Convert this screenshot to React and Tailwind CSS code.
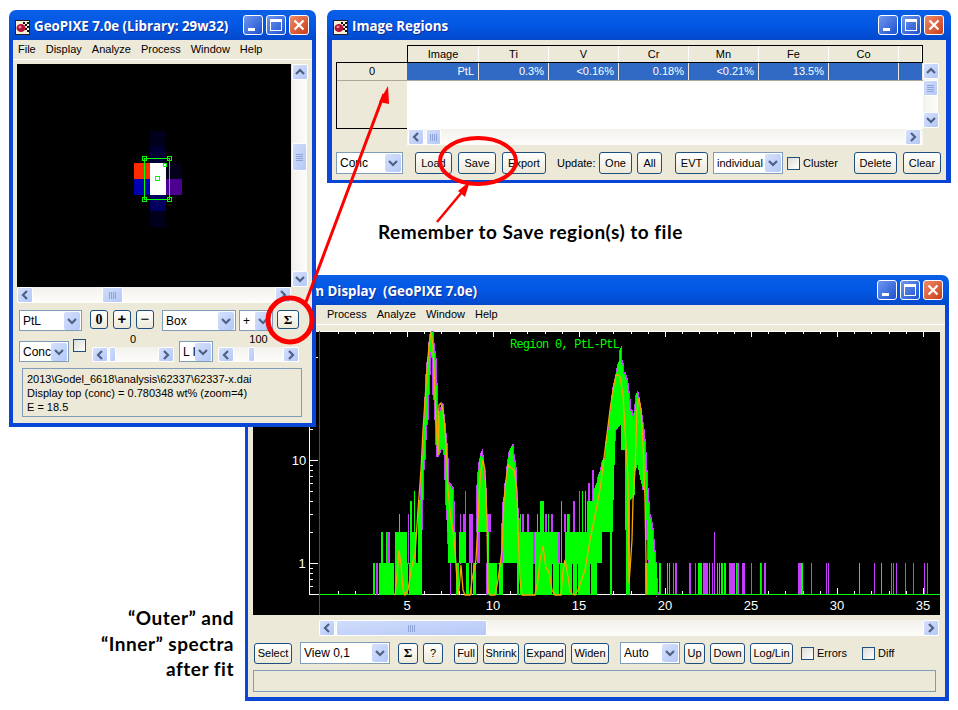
import React from "react";

const UI_FONT = "font-['Liberation_Sans',sans-serif]";

/* ---------- small xp widgets ---------- */
const Chevron = ({ dir = "down" }) => {
  const d = {
    up: "M3 9 L7 5 L11 9",
    down: "M3 5 L7 9 L11 5",
    left: "M9 3 L5 7 L9 11",
    right: "M5 3 L9 7 L5 11",
  }[dir];
  return (
    <svg width="14" height="14" viewBox="0 0 14 14" fill="none">
      <path d={d} stroke="#4d6185" strokeWidth="2.2" />
    </svg>
  );
};

const ArrowBtn = ({ dir, className = "" }) => (
  <div className={`flex h-[16px] w-[16px] shrink-0 items-center justify-center rounded-[2px] border border-white bg-gradient-to-br from-[#d5e0fb] to-[#b4c8f8] ${className}`}>
    <Chevron dir={dir} />
  </div>
);

const Grip = ({ vertical }) => (
  <div className={vertical ? "flex flex-col gap-[1px]" : "flex gap-[1px]"}>
    {[0, 1, 2, 3].map((i) => (
      <div key={i} className={vertical ? "h-[1px] w-[7px] bg-[#8ea4d8]" : "h-[7px] w-[1px] bg-[#8ea4d8]"} />
    ))}
  </div>
);

const Thumb = ({ vertical, className = "", grip = true }) => (
  <div className={`flex shrink-0 items-center justify-center rounded-[2px] border border-white bg-gradient-to-br from-[#cfdcfb] to-[#b6c9f7] ${className}`}>
    {grip && <Grip vertical={vertical} />}
  </div>
);

const Btn = ({ className = "", children }) => (
  <div className={`flex h-[21px] shrink-0 items-center justify-center rounded-[3px] border border-[#1c4f80] bg-gradient-to-b from-white to-[#ece9d8] text-[11px] text-black ${className}`}>
    {children}
  </div>
);

const Combo = ({ className = "", h = "h-[22px]", text = "text-[12px]", label }) => (
  <div className={`flex shrink-0 items-center justify-between border border-[#7f9db9] bg-white pl-[3px] pr-[1px] text-black ${text} ${h} ${className}`}>
    <span className="overflow-hidden whitespace-nowrap">{label}</span>
    <div className="flex h-[18px] w-[16px] shrink-0 items-center justify-center rounded-[2px] bg-gradient-to-br from-[#d5e0fb] to-[#b4c8f8]">
      <Chevron dir="down" />
    </div>
  </div>
);

const Check = ({ className = "" }) => (
  <div className={`h-[13px] w-[13px] shrink-0 border border-[#1c5180] bg-gradient-to-br from-[#dcdcd7] to-white ${className}`} />
);

const AppIcon = () => (
  <svg width="15" height="15" viewBox="0 0 15 15" className="shrink-0">
    <rect x="0.5" y="0.5" width="14" height="14" fill="#f4f0d8" stroke="#222" />
    <path d="M8 2h2v2H8zM12 2h2v2h-2zM10 4h2v2h-2zM12 6h2v2h-2zM10 8h2v2h-2zM12 10h2v2h-2z" fill="#111" />
    <ellipse cx="6" cy="8" rx="4.5" ry="4" fill="#b3123a" />
    <ellipse cx="5" cy="7" rx="1.5" ry="1.2" fill="#f09090" />
  </svg>
);

const TitleButtons = () => (
  <div className="flex gap-[3px]">
    <div className="relative h-[20px] w-[20px] rounded-[3px] border border-white bg-gradient-to-br from-[#6f97ee] to-[#1f4fd0]">
      <div className="absolute bottom-[3px] left-[4px] h-[3px] w-[7px] bg-white" />
    </div>
    <div className="flex h-[20px] w-[20px] items-center justify-center rounded-[3px] border border-white bg-gradient-to-br from-[#6f97ee] to-[#1f4fd0]">
      <div className="h-[12px] w-[12px] border border-t-[3px] border-white" />
    </div>
    <div className="flex h-[20px] w-[20px] items-center justify-center rounded-[3px] border border-white bg-gradient-to-br from-[#ee8a66] to-[#c83a14]">
      <svg width="12" height="12" viewBox="0 0 12 12">
        <path d="M1.5 1.5 L10.5 10.5 M10.5 1.5 L1.5 10.5" stroke="white" strokeWidth="2.2" />
      </svg>
    </div>
  </div>
);

const TitleBar = ({ children, padRight = "pr-[7px]", textClass = "" }) => (
  <div className={`flex h-[30px] shrink-0 items-center justify-between rounded-t-[7px] bg-gradient-to-b from-[#0a5fe6] via-[#0258e4] to-[#0348cc] pl-[6px] ${padRight}`}>
    <div className="flex min-w-0 items-center gap-[4px] pt-[4px]">
      <AppIcon />
      <span className={`whitespace-pre font-['Open_Sans',sans-serif] text-[13.3px] font-bold text-white [text-shadow:1px_1px_#0f2f98] ${textClass}`}>
        {children}
      </span>
    </div>
    <TitleButtons />
  </div>
);

const Menu = ({ items, className = "" }) => (
  <div className={`flex h-[20px] shrink-0 items-center gap-[10px] border-b border-white text-[11px] text-black ${className}`}>
    {items.map((m) => (
      <span key={m}>{m}</span>
    ))}
  </div>
);

/* ---------- left window image ---------- */
const ImagePixels = () => (
  <svg className="block" width="274" height="223" viewBox="17 64 274 223" shapeRendering="crispEdges">
    <rect x="17" y="64" width="274" height="223" fill="#000" />
    <rect x="150" y="131" width="16" height="16" fill="#00001c" />
    <rect x="150" y="147" width="16" height="16" fill="#000034" />
    <rect x="166" y="163" width="16" height="16" fill="#04001c" />
    <rect x="134" y="163" width="16" height="16" fill="#ff2a00" />
    <rect x="134" y="179" width="16" height="16" fill="#0000b0" />
    <rect x="150" y="163" width="16" height="32" fill="#fff" />
    <rect x="166" y="179" width="16" height="16" fill="#4b0090" />
    <rect x="150" y="195" width="16" height="16" fill="#000060" />
    <rect x="150" y="211" width="16" height="16" fill="#00001c" />
    <g fill="none" stroke="#00ff00">
      <rect x="144.5" y="158.5" width="25" height="41" />
      <rect x="142.5" y="156.5" width="4" height="4" />
      <rect x="167.5" y="156.5" width="4" height="4" />
      <rect x="142.5" y="197.5" width="4" height="4" />
      <rect x="167.5" y="197.5" width="4" height="4" />
      <rect x="155.5" y="176.5" width="4" height="4" />
      <rect x="163.5" y="163.5" width="3" height="3" />
    </g>
  </svg>
);

/* ---------- spectrum data (page coordinates) ---------- */
const interp = (pts, x) => {
  if (x <= pts[0][0]) return pts[0][1];
  for (let i = 1; i < pts.length; i++) {
    if (x <= pts[i][0]) {
      const [x0, y0] = pts[i - 1];
      const [x1, y1] = pts[i];
      return y0 + ((y1 - y0) * (x - x0)) / (x1 - x0);
    }
  }
  return pts[pts.length - 1][1];
};

const wobble = (x) => (((x * 7919) % 13) / 13 - 0.5) * 5;

const band = (x0, x1, top, bot, jitter = 0) => {
  const out = [];
  for (let x = x0; x < x1; x++) {
    out.push([x, x + 1, Math.round(interp(top, x) + jitter * wobble(x)), Math.round(interp(bot, x))]);
  }
  return out;
};

const PEAKS = [
  ...band(
    421,
    453,
    [[421, 470], [422, 455], [423, 440], [424, 418], [425, 395], [426, 372], [427, 360], [428, 355], [429, 340], [430, 332], [432, 332], [433, 345], [435, 360], [436, 385], [437, 410], [439, 416], [441, 405], [442, 406], [444, 425], [446, 445], [447, 460], [448, 484], [453, 490]],
    [[421, 595], [422, 500], [423, 470], [424, 460], [425, 440], [426, 425], [427, 420], [428, 395], [429, 375], [430, 352], [432, 358], [433, 395], [434, 400], [435, 425], [436, 445], [437, 457], [441, 448], [443, 450], [444, 455], [445, 480], [446, 510], [447, 532], [448, 563], [453, 563]],
  ),
  ...band(
    477,
    488,
    [[477, 483], [478, 470], [479, 460], [480, 455], [481, 452], [482, 458], [483, 470], [485, 490], [486, 515], [487, 532]],
    [[477, 532], [487, 532]],
    0.4,
  ),
  ...band(
    503,
    519,
    [[503, 500], [505, 490], [507, 465], [509, 450], [511, 446], [512, 445], [513, 455], [515, 470], [516, 500], [518, 520]],
    [[503, 563], [518, 563]],
    0.4,
  ),
  ...band(
    593,
    658,
    [[593, 491], [596, 483], [600, 470], [602, 460], [605, 457], [606, 440], [608, 430], [610, 410], [611, 403], [613, 385], [615, 377], [617, 365], [619, 362], [620, 348], [621, 362], [622, 365], [623, 373], [626, 380], [627, 385], [629, 400], [630, 410], [633, 420], [636, 392], [637, 395], [640, 410], [643, 430], [645, 455], [647, 490], [649, 515], [652, 530], [655, 563], [657, 595]],
    [[593, 595], [596, 595], [597, 563], [601, 563], [602, 532], [609, 532], [610, 595], [611, 595], [612, 532], [613, 500], [615, 430], [620, 425], [621, 450], [624, 450], [625, 530], [626, 595], [629, 595], [630, 500], [634, 495], [635, 470], [637, 465], [640, 480], [643, 490], [645, 480], [646, 520], [648, 560], [652, 595], [657, 595]],
    0.5,
  ),
];

// [x0, x1, top, bottom]
const GREEN = [
  [319, 373, 594, 595],
  [373, 375, 563, 595], [379, 394, 563, 595], [381, 383, 532, 563], [386, 387, 532, 563],
  [395, 407, 532, 595], [399, 400, 514, 532], [407, 410, 563, 595], [410, 412, 501, 595],
  [412, 416, 532, 595], [414, 415, 491, 532], [416, 418, 563, 595], [418, 421, 500, 595],
  [453, 456, 532, 563], [456, 459, 563, 595], [459, 466, 532, 563], [466, 469, 563, 595],
  [471, 472, 563, 595], [473, 477, 563, 595], [487, 489, 532, 595], [489, 497, 563, 595],
  [498, 503, 563, 595], [517, 519, 563, 595], [519, 524, 532, 563], [524, 530, 532, 595],
  [520, 521, 514, 595], [521, 533, 532, 595], [535, 540, 532, 595], [537, 538, 514, 532],
  [540, 544, 501, 595], [544, 558, 532, 595], [548, 549, 514, 532], [558, 565, 563, 595],
  [561, 562, 501, 563], [565, 578, 532, 595], [567, 569, 514, 532], [578, 582, 532, 595],
  [582, 583, 491, 595], [583, 587, 532, 595], [585, 586, 491, 532], [587, 593, 501, 595],
  ...PEAKS,
  [645, 657, 563, 595],
  [659, 661, 563, 595], [667, 668, 563, 595], [669, 670, 563, 595], [698, 699, 563, 595],
  [699, 702, 563, 595], [709, 710, 563, 595], [717, 718, 563, 595], [719, 720, 563, 595],
  [721, 723, 563, 595], [724, 726, 563, 595], [736, 737, 563, 595], [760, 761, 563, 595],
  [801, 803, 563, 595], [859, 860, 563, 595], [881, 882, 563, 595],
  [657, 940, 594, 595],
];

const PURPLE = [
  [376, 378, 563, 595], [387, 390, 532, 595], [408, 409, 514, 595], [414, 415, 491, 595],
  [420, 422, 563, 595], [448, 451, 483, 532], [450, 451, 563, 595], [453, 455, 501, 563],
  [460, 461, 514, 595], [463, 466, 514, 532], [465, 466, 491, 514], [469, 473, 514, 563],
  [477, 480, 532, 563], [486, 488, 563, 595], [488, 491, 514, 532], [501, 503, 523, 563],
  [504, 505, 483, 563], [511, 513, 448, 470], [517, 519, 532, 563], [522, 524, 514, 532],
  [527, 529, 514, 532], [533, 535, 532, 595], [545, 547, 514, 532], [551, 553, 514, 532],
  [558, 560, 532, 563], [564, 566, 514, 532], [568, 570, 514, 532], [573, 575, 501, 532],
  [579, 580, 491, 532], [588, 590, 483, 501], [592, 594, 470, 501],
  ...PEAKS.flatMap(([a, b, t, u]) => [[a - 1, b - 1, t + 2, Math.min(u, t + 60)], [a + 1, b + 1, t - 2, Math.min(u, t + 60)]]),
  [656, 657, 563, 595], [673, 674, 563, 595], [675, 677, 563, 595], [689, 691, 563, 595],
  [695, 696, 563, 595], [703, 708, 563, 595], [712, 713, 563, 595], [714, 715, 532, 595],
  [729, 735, 563, 595], [737, 739, 563, 595], [742, 745, 563, 595], [751, 752, 563, 595],
  [761, 762, 563, 595], [764, 766, 563, 595], [798, 801, 563, 595], [811, 812, 563, 595],
  [826, 827, 563, 595], [828, 829, 563, 595], [874, 875, 563, 595], [891, 892, 563, 595],
  [893, 894, 563, 595], [896, 897, 563, 595], [905, 906, 563, 595], [913, 914, 563, 595],
  [924, 925, 563, 595], [927, 928, 563, 595],
];

// thin gaps showing through the noisy low-count part
const GAPS = [378, 394, 408, 460, 476, 497, 498, 533, 534, 552, 559, 572, 577, 590, 607];

const FIT = "395,595 397,575 399,550 401,565 403,590 405,595 408,590 412,565 415,555 416,540 418,510 421,470 423,430 425,400 427,370 429,345 431,332 433,345 434,370 436,420 437,437 438,455 439,405 441,403 443,410 445,430 447,460 448,490 449,500 451,520 453,530 455,550 456,565 458,595 459,590 461,565 463,590 465,595 470,595 472,580 476,560 478,520 480,480 481,470 483,460 485,470 487,520 488,590 490,595 495,595 498,580 502,550 504,500 506,480 508,465 511,468 514,470 517,490 518,530 520,580 522,595 535,595 538,580 540,560 543,546 546,568 549,572 552,590 555,595 561,595 563,570 565,560 567,570 570,590 572,594 575,595 578,590 585,570 590,540 596,510 600,490 605,450 610,410 613,390 616,375 618,375 620,377 623,395 625,430 628,480 629,583 630,570 632,540 633,500 635,470 637,410 639,398 641,410 643,445 645,500 646,560 647,595";

const YMINOR = [0.6, 0.7, 0.8, 0.9, 2, 3, 4, 5, 6, 7, 8, 9, 20, 30, 40, 50, 60, 70, 80, 90, 200];
const yOf = (v) => 563 - 103 * Math.log10(v);
const TICKS = Array.from({ length: 36 }, (_, i) => i + 1);
const xOf = (n) => Math.round(407 + (n - 5) * 17.2);

const Spectrum = () => (
  <svg className="block" width="687" height="284" viewBox="253 331 687 284">
    <rect x="253" y="331" width="687" height="284" fill="#000" />
    <g shapeRendering="crispEdges">
      <rect x="309" y="331" width="631" height="1" fill="#fff" />
      <rect x="309" y="331" width="1" height="264" fill="#fff" />
      <rect x="309" y="594" width="348" height="1" fill="#fff" />
      {TICKS.map((n) => {
        const major = n % 5 === 0;
        const h = major ? 6 : 3;
        return (
          <g key={n} fill="#fff">
            <rect x={xOf(n)} y="331" width="1" height={h} />
            <rect x={xOf(n)} y={594 - h} width="1" height={h} />
          </g>
        );
      })}
      <rect x="309" y="357" width="9" height="1" fill="#fff" />
      <rect x="309" y="460" width="9" height="1" fill="#fff" />
      <rect x="309" y="563" width="9" height="1" fill="#fff" />
      {YMINOR.map((v) => (
        <rect key={v} x="309" y={Math.round(yOf(v))} width="4" height="1" fill="#fff" />
      ))}
      {PURPLE.map(([a, b, t, u], i) => (
        <rect key={i} x={a} y={t} width={b - a} height={Math.max(u - t, 1)} fill="#c83cff" />
      ))}
      {GREEN.map(([a, b, t, u], i) => (
        <rect key={i} x={a} y={t} width={b - a} height={Math.max(u - t, 1)} fill="#00ff00" />
      ))}
      {GAPS.map((x) => (
        <rect key={x} x={x} y="564" width="1" height="30" fill="#000" />
      ))}
      <rect x="319" y="331" width="1" height="284" fill="#ff0000" />
    </g>
    <polyline points={FIT} fill="none" stroke="#f7a600" strokeWidth="1.3" />
    <g fill="#fff" fontFamily="Liberation Sans" fontSize="13" textAnchor="middle">
      {[5, 10, 15, 20, 25, 30, 35].map((n) => (
        <text key={n} x={xOf(n)} y="610">{n}</text>
      ))}
      <text x="299" y="465">10</text>
      <text x="302" y="568">1</text>
    </g>
    <text x="510" y="348" fill="#00ff00" fontFamily="Liberation Mono" fontSize="12" textLength="110" lengthAdjust="spacing">Region 0, PtL-PtL</text>
  </svg>
);

const Annotations = () => (
  <svg className="pointer-events-none absolute left-0 top-0" width="958" height="710" viewBox="0 0 958 710" fill="none">
    <path d="M306 302 L384 94" stroke="#ff0000" strokeWidth="3" />
    <polygon points="388,86 379,102 389,104" fill="#ff0000" />
    <path d="M437 222 L462 192" stroke="#ff0000" strokeWidth="2.5" />
    <polygon points="470,181 458,191 465,197" fill="#ff0000" />
    <ellipse cx="478" cy="161" rx="38" ry="23" stroke="#ff0000" strokeWidth="4" />
    <ellipse cx="290" cy="320" rx="22" ry="22" stroke="#ff0000" strokeWidth="5" />
  </svg>
);

export default function App() {
  return (
    <div className={`relative h-[710px] w-[958px] overflow-hidden bg-white ${UI_FONT}`}>
      {/* ------------------- SPECTRUM WINDOW ------------------- */}
      <div className="absolute left-[245px] top-[275px] flex h-[426px] w-[704px] flex-col">
        <TitleBar padRight="pr-[6px]" textClass="-ml-[10px]">Spectrum Display  (GeoPIXE 7.0e)</TitleBar>
        <div className="flex min-h-0 flex-1 flex-col border-x-[4px] border-b-[4px] border-[#0a46d6] border-l-[3px] bg-[#ece9d8]">
          <Menu items={["Process", "Analyze", "Window", "Help"]} className="pl-[79px]" />
          <div className="ml-[5px] mt-[6px]">
            <Spectrum />
          </div>
          <div className="ml-[71px] mt-[5px] flex h-[16px] w-[620px] bg-gradient-to-b from-[#f3f1ec] to-[#fdfdfb]">
            <ArrowBtn dir="left" />
            <Thumb className="ml-[1px] h-[16px] w-[151px]" />
            <div className="flex-1" />
            <ArrowBtn dir="right" />
          </div>
          <div className="ml-[6px] mt-[6px] flex h-[22px] items-center">
            <Btn className="w-[38px]">Select</Btn>
            <Combo className="ml-[8px] w-[90px]" label="View 0,1" />
            <Btn className="ml-[8px] w-[20px] font-['Liberation_Serif',serif] text-[13px] font-bold">Σ</Btn>
            <Btn className="ml-[5px] w-[20px]">?</Btn>
            <Btn className="ml-[11px] w-[24px]">Full</Btn>
            <Btn className="ml-[5px] w-[36px]">Shrink</Btn>
            <Btn className="ml-[5px] w-[42px]">Expand</Btn>
            <Btn className="ml-[5px] w-[38px]">Widen</Btn>
            <Combo className="ml-[11px] w-[60px]" label="Auto" />
            <Btn className="ml-[4px] w-[21px]">Up</Btn>
            <Btn className="ml-[5px] w-[35px]">Down</Btn>
            <Btn className="ml-[5px] w-[43px]">Log/Lin</Btn>
            <Check className="ml-[8px]" />
            <span className="ml-[3px] w-[29px] text-[11px] text-black">Errors</span>
            <Check className="ml-[16px]" />
            <span className="ml-[3px] text-[11px] text-black">Diff</span>
          </div>
          <div className="ml-[5px] mt-[6px] h-[22px] w-[683px] border border-[#7f9db9]" />
        </div>
      </div>

      {/* ------------------- IMAGE WINDOW ------------------- */}
      <div className="absolute left-[9px] top-[10px] flex h-[417px] w-[307px] flex-col">
        <TitleBar>GeoPIXE 7.0e (Library: 29w32)</TitleBar>
        <div className="flex min-h-0 flex-1 flex-col border-x-[4px] border-b-[4px] border-[#0a46d6] bg-[#ece9d8]">
          <Menu items={["File", "Display", "Analyze", "Process", "Window", "Help"]} className="pl-[5px]" />
          <div className="ml-[4px] mt-[4px] flex">
            <ImagePixels />
            <div className="ml-[1px] flex h-[223px] w-[15px] flex-col items-center bg-gradient-to-r from-[#f3f1ec] to-[#fdfdfb]">
              <ArrowBtn dir="up" />
              <Thumb vertical className="mt-[63px] h-[28px] w-[15px]" />
              <div className="flex-1" />
              <ArrowBtn dir="down" />
            </div>
          </div>
          <div className="ml-[4px] flex h-[16px] w-[274px] bg-gradient-to-b from-[#f3f1ec] to-[#fdfdfb]">
            <ArrowBtn dir="left" />
            <Thumb className="ml-[69px] h-[16px] w-[21px]" />
            <div className="flex-1" />
            <ArrowBtn dir="right" />
          </div>
          <div className="ml-[6px] mt-[7px] flex h-[21px] items-start">
            <Combo className="w-[63px]" h="h-[21px]" label="PtL" />
            <Btn className="ml-[8px] w-[18px] !h-[19px] font-['Liberation_Serif',serif] text-[14px] font-bold">0</Btn>
            <Btn className="ml-[5px] w-[18px] !h-[19px] text-[15px] font-bold">+</Btn>
            <Btn className="ml-[5px] w-[18px] !h-[19px] text-[15px]">−</Btn>
            <Combo className="ml-[8px] w-[74px]" h="h-[21px]" label="Box" />
            <Combo className="ml-[3px] w-[34px]" h="h-[21px]" label="+" />
            <Btn className="ml-[4px] w-[22px] !h-[19px] font-['Liberation_Serif',serif] text-[13px] font-bold">Σ</Btn>
          </div>
          <div className="ml-[6px] mt-[8px] flex h-[23px]">
            <Combo className="mt-[2px] w-[50px]" h="h-[21px]" label="Conc" />
            <Check className="ml-[4px]" />
            <div className="ml-[6px] flex w-[82px] flex-col">
              <span className="h-[8px] text-center text-[11px] leading-[1px] text-black">0</span>
              <div className="flex h-[15px] bg-gradient-to-b from-[#f3f1ec] to-[#fdfdfb]">
                <ArrowBtn dir="left" className="!h-[15px]" />
                <Thumb grip={false} className="ml-[1px] h-[15px] w-[7px]" />
                <div className="flex-1" />
                <ArrowBtn dir="right" className="!h-[15px]" />
              </div>
            </div>
            <Combo className="ml-[5px] mt-[2px] w-[34px]" h="h-[21px]" label="L I" />
            <div className="ml-[5px] flex w-[81px] flex-col">
              <span className="h-[8px] text-center text-[11px] leading-[1px] text-black">100</span>
              <div className="flex h-[15px] bg-gradient-to-b from-[#f3f1ec] to-[#fdfdfb]">
                <ArrowBtn dir="left" className="!h-[15px]" />
                <div className="w-[14px]" />
                <Thumb grip={false} className="h-[15px] w-[7px]" />
                <div className="flex-1" />
                <ArrowBtn dir="right" className="!h-[15px]" />
              </div>
            </div>
          </div>
          <div className="ml-[9px] mt-[6px] flex h-[49px] w-[280px] flex-col justify-center border border-[#7f9db9] pl-[4px] text-[11px] leading-[14px] text-black">
            <span>2013\Godel_6618\analysis\62337\62337-x.dai</span>
            <span>Display top (conc) = 0.780348 wt% (zoom=4)</span>
            <span>E = 18.5</span>
          </div>
        </div>
      </div>

      {/* ------------------- REGIONS WINDOW ------------------- */}
      <div className="absolute left-[327px] top-[10px] flex h-[173px] w-[624px] flex-col">
        <TitleBar>Image Regions</TitleBar>
        <div className="flex min-h-0 flex-1 flex-col border-x-[5px] border-b-[3px] border-[#0a46d6] bg-[#ece9d8]">
          <div className="ml-[4px] mt-[5px] flex">
            <div className="mt-[17px] flex h-[67px] w-[71px] flex-col border border-r-0 border-black">
              <div className="flex h-[18px] items-center justify-center border-b border-[#aca899] text-[11px] text-black">0</div>
            </div>
            <div className="w-[516px]">
              <div className="flex h-[18px] border border-black text-[11px] text-black">
                {[["Image", "w-[71px]"], ["Ti", "w-[70px]"], ["V", "w-[70px]"], ["Cr", "w-[70px]"], ["Mn", "w-[70px]"], ["Fe", "w-[70px]"], ["Co", "w-[70px]"], ["", "flex-1"]].map(([h, w], i) => (
                  <div key={i} className={`flex items-center justify-center border-r border-white ${w}`}>{h}</div>
                ))}
              </div>
              <div className="flex h-[18px] border-b border-[#aca899] bg-[#316ac5] text-[11px] text-white">
                {[["PtL", "w-[72px]"], ["0.3%", "w-[70px]"], ["<0.16%", "w-[70px]"], ["0.18%", "w-[70px]"], ["<0.21%", "w-[70px]"], ["13.5%", "w-[70px]"], ["", "w-[70px]"], ["", "flex-1"]].map(([v, w], i) => (
                  <div key={i} className={`flex items-center justify-end border-r border-[#ece9d8] pr-[4px] ${w}`}>{v}</div>
                ))}
              </div>
              <div className="h-[48px] bg-white" />
              <div className="flex h-[16px] bg-gradient-to-b from-[#f3f1ec] to-[#fdfdfb] pl-[1px] pr-[2px]">
                <ArrowBtn dir="left" />
                <Thumb className="ml-[2px] h-[16px] w-[15px]" />
                <div className="flex-1" />
                <ArrowBtn dir="right" />
              </div>
            </div>
            <div className="mt-[18px] flex h-[65px] w-[15px] flex-col items-center bg-gradient-to-r from-[#f3f1ec] to-[#fdfdfb]">
              <ArrowBtn dir="up" />
              <Thumb vertical className="mt-[1px] h-[16px] w-[15px]" />
              <div className="flex-1" />
              <ArrowBtn dir="down" />
            </div>
          </div>
          <div className="ml-[4px] mt-[7px] flex h-[22px] items-center">
            <Combo className="w-[67px]" label="Conc" />
            <Btn className="ml-[12px] !h-[22px] w-[37px]">Load</Btn>
            <Btn className="ml-[6px] !h-[22px] w-[38px]">Save</Btn>
            <Btn className="ml-[6px] !h-[22px] w-[44px]">Export</Btn>
            <span className="ml-[11px] w-[36px] whitespace-nowrap text-[11px] text-black">Update:</span>
            <Btn className="ml-[6px] !h-[22px] w-[33px]">One</Btn>
            <Btn className="ml-[5px] !h-[22px] w-[25px]">All</Btn>
            <Btn className="ml-[13px] !h-[22px] w-[33px]">EVT</Btn>
            <Combo className="ml-[5px] w-[70px]" text="text-[11px]" label="individual" />
            <Check className="ml-[4px]" />
            <span className="ml-[3px] w-[33px] text-[11px] text-black">Cluster</span>
            <Btn className="ml-[18px] !h-[22px] w-[43px]">Delete</Btn>
            <Btn className="ml-[6px] !h-[22px] w-[38px]">Clear</Btn>
          </div>
        </div>
      </div>

      <Annotations />

      {/* ------------------- CAPTIONS ------------------- */}
      <p className="absolute left-[378px] top-[220px] whitespace-nowrap font-['Lato',sans-serif] text-[19px] font-bold leading-[24px] tracking-[0.5px] text-black">
        Remember to Save region(s) to file
      </p>
      <p className="absolute left-[90px] top-[605px] w-[144px] text-right font-['Lato',sans-serif] text-[19px] font-bold leading-[25.5px] tracking-[0.5px] text-black">
        “Outer” and
        <br />
        “Inner” spectra
        <br />
        after fit
      </p>
    </div>
  );
}
